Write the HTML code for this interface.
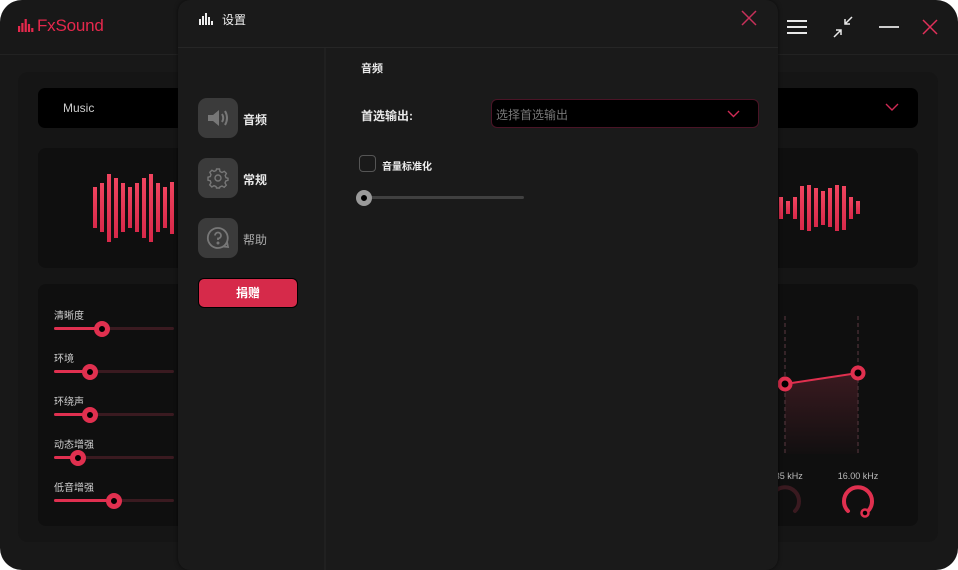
<!DOCTYPE html>
<html><head><meta charset="utf-8"><style>
*{margin:0;padding:0;box-sizing:border-box}
body{width:958px;height:570px;background:#fff;overflow:hidden;position:relative;font-family:"Liberation Sans","Noto Sans CJK SC",sans-serif}
.abs{position:absolute}
#win{left:0;top:0;width:958px;height:570px;background:#181818;border-radius:22px;overflow:hidden}
.bar{position:absolute;width:4px;background:linear-gradient(#f0445f,#d8294a)}
.lab{position:absolute;font-size:10px;color:#cfcfcf}
.trk{position:absolute;height:3px;background:#3a1a20;border-radius:2px;left:54px;width:120px}
.fill{position:absolute;height:3px;background:#e03050;border-radius:2px;left:54px}
.th{position:absolute;width:16px;height:16px;border-radius:50%;background:#000;border:5px solid #e0304f}
.nav{position:absolute;left:198px;width:40px;height:40px;border-radius:9px;background:#3b3b3b}
.nt{position:absolute;left:243px;font-size:12px;color:#e8e8e8}
</style></head><body>
<div id="win" class="abs">
 <svg class="abs" style="left:18px;top:19px" width="16" height="14"><g fill="#e5284c"><rect x="0" y="7" width="2.2" height="6"/><rect x="3.3" y="4" width="2.2" height="9"/><rect x="6.6" y="0" width="2.2" height="13"/><rect x="9.9" y="5" width="2.2" height="8"/><rect x="13.2" y="9" width="2.2" height="4"/></g></svg>
 <div class="abs" style="left:37px;top:16px;font-size:17px;color:#e5284c;letter-spacing:-0.2px">FxSound</div>
 <div class="abs" style="left:0;top:54px;width:958px;height:1px;background:#222"></div>
 <svg class="abs" style="left:787px;top:19px" width="20" height="16"><g stroke="#e8e8e8" stroke-width="2"><line x1="0" y1="2" x2="20" y2="2"/><line x1="0" y1="8" x2="20" y2="8"/><line x1="0" y1="14" x2="20" y2="14"/></g></svg>
 <svg class="abs" style="left:832px;top:16px" width="22" height="22" fill="none" stroke="#e8e8e8" stroke-width="1.5"><path d="M20 1L13 8M13 3V8H18M2 21L9 14M4 14H9V19"/></svg>
 <div class="abs" style="left:879px;top:26px;width:20px;height:2px;background:#ccc"></div>
 <svg class="abs" style="left:922px;top:19px" width="16" height="16" stroke="#e0305a" stroke-width="1.5"><path d="M1 1L15 15M15 1L1 15"/></svg>
 <div class="abs" style="left:18px;top:72px;width:920px;height:470px;background:#151515;border-radius:10px"></div>
 <div class="abs" style="left:38px;top:88px;width:880px;height:40px;background:#000;border-radius:7px"></div>
 <div class="abs" style="left:63px;top:101px;font-size:12px;color:#ccc">Music</div>
 <svg class="abs" style="left:885px;top:103px" width="14" height="9" fill="none" stroke="#d02a55" stroke-width="1.4"><path d="M1 1L7 7L13 1"/></svg>
 <div class="abs" style="left:38px;top:148px;width:880px;height:120px;background:#0f0f0f;border-radius:8px"></div>
 <div class="abs" style="left:38px;top:284px;width:880px;height:242px;background:#0f0f0f;border-radius:8px"></div>
 <div class="bar" style="left:93px;top:187px;height:41px"></div>
 <div class="bar" style="left:100px;top:183px;height:49px"></div>
 <div class="bar" style="left:107px;top:174px;height:68px"></div>
 <div class="bar" style="left:114px;top:178px;height:60px"></div>
 <div class="bar" style="left:121px;top:183px;height:49px"></div>
 <div class="bar" style="left:128px;top:187px;height:41px"></div>
 <div class="bar" style="left:135px;top:183px;height:49px"></div>
 <div class="bar" style="left:142px;top:178px;height:60px"></div>
 <div class="bar" style="left:149px;top:174px;height:68px"></div>
 <div class="bar" style="left:156px;top:183px;height:49px"></div>
 <div class="bar" style="left:163px;top:187px;height:41px"></div>
 <div class="bar" style="left:170px;top:182px;height:52px"></div>
 <div class="bar" style="left:779px;top:197px;height:22px"></div>
 <div class="bar" style="left:786px;top:201px;height:13px"></div>
 <div class="bar" style="left:793px;top:197px;height:22px"></div>
 <div class="bar" style="left:800px;top:186px;height:44px"></div>
 <div class="bar" style="left:807px;top:185px;height:46px"></div>
 <div class="bar" style="left:814px;top:188px;height:39px"></div>
 <div class="bar" style="left:821px;top:191px;height:34px"></div>
 <div class="bar" style="left:828px;top:188px;height:39px"></div>
 <div class="bar" style="left:835px;top:185px;height:46px"></div>
 <div class="bar" style="left:842px;top:186px;height:44px"></div>
 <div class="bar" style="left:849px;top:197px;height:22px"></div>
 <div class="bar" style="left:856px;top:201px;height:13px"></div>
 <div class="lab" style="left:54px;top:307px">清晰度</div>
 <div class="trk" style="top:327px"></div><div class="fill" style="top:327px;width:48px"></div><div class="th" style="left:94px;top:321px"></div>
 <div class="lab" style="left:54px;top:350px">环境</div>
 <div class="trk" style="top:370px"></div><div class="fill" style="top:370px;width:36px"></div><div class="th" style="left:82px;top:364px"></div>
 <div class="lab" style="left:54px;top:393px">环绕声</div>
 <div class="trk" style="top:413px"></div><div class="fill" style="top:413px;width:36px"></div><div class="th" style="left:82px;top:407px"></div>
 <div class="lab" style="left:54px;top:436px">动态增强</div>
 <div class="trk" style="top:456px"></div><div class="fill" style="top:456px;width:24px"></div><div class="th" style="left:70px;top:450px"></div>
 <div class="lab" style="left:54px;top:479px">低音增强</div>
 <div class="trk" style="top:499px"></div><div class="fill" style="top:499px;width:60px"></div><div class="th" style="left:106px;top:493px"></div>
 <svg class="abs" style="left:760px;top:300px" width="180" height="240">
  <defs><linearGradient id="g" x1="0" y1="0" x2="0" y2="1"><stop offset="0" stop-color="#3a1a20"/><stop offset="1" stop-color="#120f10"/></linearGradient></defs>
  <path d="M25 84L98 73L98 154L25 154Z" fill="url(#g)"/>
  <g stroke="#4a3036" stroke-width="1.3" stroke-dasharray="4 3"><line x1="25" y1="16" x2="25" y2="154"/><line x1="98" y1="16" x2="98" y2="154"/></g>
  <line x1="25" y1="84" x2="98" y2="73" stroke="#e0304f" stroke-width="2"/>
  <circle cx="25" cy="84" r="5.5" fill="#000" stroke="#e0304f" stroke-width="4"/>
  <circle cx="98" cy="73" r="5.5" fill="#000" stroke="#e0304f" stroke-width="4"/>
  <text x="98" y="179" font-size="9" fill="#bbb" text-anchor="middle" font-family="Liberation Sans">16.00 kHz</text>
  <text x="25" y="179" font-size="9" fill="#bbb" text-anchor="middle" font-family="Liberation Sans">2.35 kHz</text>
  <path d="M88 211A14 14 0 1 1 108 211" fill="none" stroke="#e0304f" stroke-width="4" stroke-linecap="round"/>
  <circle cx="105" cy="213" r="3.5" fill="#000" stroke="#e0304f" stroke-width="2.5"/>
  <path d="M15 211A14 14 0 1 1 35 211" fill="none" stroke="#3a1a20" stroke-width="4" stroke-linecap="round"/>
 </svg>
 <div class="abs" style="left:178px;top:0;width:600px;height:570px;background:#1a1a1a;border-radius:12px;box-shadow:0 0 4px rgba(0,0,0,.6)">
  <svg class="abs" style="left:21px;top:13px" width="15" height="12"><g fill="#eee"><rect x="0" y="6" width="2" height="6"/><rect x="3" y="3" width="2" height="9"/><rect x="6" y="0" width="2" height="12"/><rect x="9" y="4" width="2" height="8"/><rect x="12" y="8" width="2" height="4"/></g></svg>
  <div class="abs" style="left:44px;top:11px;font-size:12px;color:#eee">设置</div>
  <svg class="abs" style="left:563px;top:10px" width="16" height="16" stroke="#c8305a" stroke-width="1.5"><path d="M1 1L15 15M15 1L1 15"/></svg>
  <div class="abs" style="left:0;top:47px;width:600px;height:1px;background:#262626"></div>
  <div class="abs" style="left:146px;top:48px;width:2px;height:522px;background:#202020"></div>
  <div class="abs" style="left:183px;top:60px;font-size:11px;color:#e8e8e8;font-weight:bold">音频</div>
  <div class="abs" style="left:183px;top:107px;font-size:12px;color:#e8e8e8;font-weight:bold">首选输出:</div>
  <div class="abs" style="left:313px;top:99px;width:268px;height:29px;background:#000;border:1px solid #4a1426;border-radius:6px"></div>
  <div class="abs" style="left:318px;top:106px;font-size:12px;color:#777">选择首选输出</div>
  <svg class="abs" style="left:549px;top:110px" width="13" height="8" fill="none" stroke="#d02a55" stroke-width="1.4"><path d="M1 1L6.5 6.5L12 1"/></svg>
  <div class="abs" style="left:181px;top:155px;width:17px;height:17px;border:1.5px solid #555;border-radius:4px"></div>
  <div class="abs" style="left:204px;top:158px;font-size:10px;color:#eee;font-weight:bold">音量标准化</div>
  <div class="abs" style="left:186px;top:196px;width:160px;height:3px;background:#404040;border-radius:2px"></div>
  <div class="abs" style="left:178px;top:190px;width:16px;height:16px;border-radius:50%;background:#000;border:5px solid #9a9a9a"></div>
 </div>
 <div class="nav" style="top:98px"></div>
 <svg class="abs" style="left:206px;top:106px" width="24" height="24" fill="none" stroke="#777" stroke-width="2"><path d="M2 9H7L13 4V20L7 15H2Z" fill="#777" stroke="none"/><path d="M16 8Q18.5 12 16 16M19 5Q23 12 19 19"/></svg>
 <div class="nt" style="top:111px;font-weight:bold">音频</div>
 <div class="nav" style="top:158px"></div>
 <svg class="abs" style="left:207px;top:167px" width="22" height="22" fill="none" stroke="#777" stroke-width="1.4"><circle cx="11" cy="11" r="3"/><path d="M9.5 2H12.5L13 4.5L15 5.5L17.3 4.3L19.4 6.4L18.2 8.7L19 10.7L21 11.3V13.3L18.8 14L18 16L19.3 18.2L17.2 20.3L15 19L13 19.8L12.5 21H9.5L9 19.5L7 18.7L4.8 20L2.7 17.9L4 15.7L3.2 13.7L1 13.2V10.2L3.3 9.5L4 7.5L2.8 5.3L4.9 3.2L7 4.4L9 3.6Z"/></svg>
 <div class="nt" style="top:171px;font-weight:bold">常规</div>
 <div class="nav" style="top:218px"></div>
 <svg class="abs" style="left:206px;top:226px" width="24" height="24" fill="none" stroke="#777" stroke-width="1.8"><path d="M12 2A10 10 0 1 0 21 16L22 21L17 20.5A10 10 0 0 0 12 2Z"/><path d="M9 9.5A3 3 0 1 1 12 12.5V14"/><circle cx="12" cy="17" r="0.6" fill="#777"/></svg>
 <div class="nt" style="top:231px;color:#aaa">帮助</div>
 <div class="abs" style="left:198px;top:278px;width:100px;height:30px;background:#d62a4a;border-radius:6px;border:1px solid #000;color:#fff;font-size:12px;font-weight:bold;text-align:center;line-height:28px">捐赠</div>
</div>
</body></html>
